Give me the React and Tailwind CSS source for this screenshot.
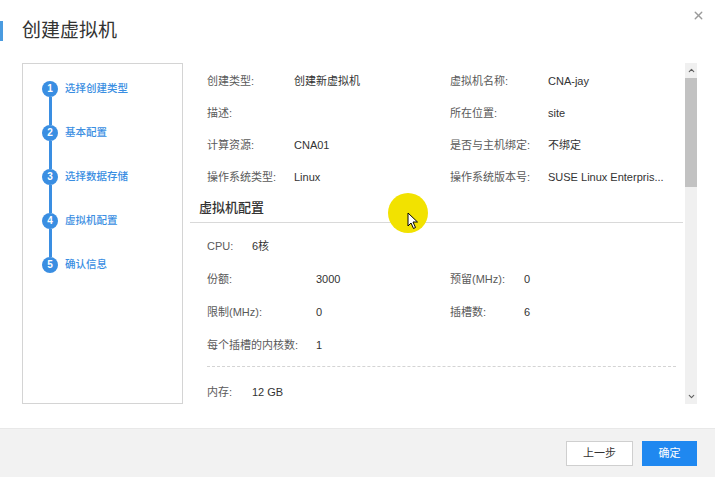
import { X, ChevronUp, ChevronDown } from 'lucide-react';

const steps = ['选择创建类型', '基本配置', '选择数据存储', '虚拟机配置', '确认信息'];

const basicRows = [
    ['创建类型:', '创建新虚拟机', '虚拟机名称:', 'CNA-jay'],
    ['描述:', '', '所在位置:', 'site'],
    ['计算资源:', 'CNA01', '是否与主机绑定:', '不绑定'],
    ['操作系统类型:', 'Linux', '操作系统版本号:', 'SUSE Linux Enterpris...'],
];

const cpuRows = [
    ['份额:', '3000', '预留(MHz):', '0'],
    ['限制(MHz):', '0', '插槽数:', '6'],
    ['每个插槽的内核数:', '1', '', ''],
];

export default function App() {
    return (
        <div className="relative w-[715px] h-[477px] bg-white flex flex-col font-['Liberation_Sans','Noto_Sans_CJK_SC',sans-serif] text-[#333] overflow-hidden">
            {/* header */}
            <div className="relative h-[63px] flex items-start">
                <div className="w-[3px] h-[20px] mt-[21px] bg-[#4a9be0]" />
                <h1 className="ml-[19px] mt-[18px] text-[19px] leading-[26px] text-[#333]">创建虚拟机</h1>
                <X size={13} strokeWidth={2.5} className="absolute right-[10px] top-[9px] text-[#9a9a9a]" />
            </div>

            {/* body */}
            <div className="flex h-[341px]">
                <div className="ml-[22px] w-[161px] h-full border border-[#d4d4d4] pt-[17px] pl-[19px]">
                    {steps.map((s, i) => (
                        <div key={s}>
                            <div className="flex items-center h-[16px]">
                                <div className="w-[16px] h-[16px] rounded-full bg-[#3a8ee2] text-white text-[10px] font-bold flex items-center justify-center leading-none">
                                    {i + 1}
                                </div>
                                <span className="ml-[7px] text-[10.5px] font-medium text-[#3a8ee2]">{s}</span>
                            </div>
                            {i < steps.length - 1 && <div className="ml-[6.5px] w-[3px] h-[28px] bg-[#3a8ee2]" />}
                        </div>
                    ))}
                </div>

                <div className="ml-[7px] flex-1 flex overflow-hidden">
                    <div className="flex-1 text-[11px] overflow-hidden">
                        <div className="pt-[2px] pl-[17px]">
                            {basicRows.map((r) => (
                                <div key={r[0]} className="flex items-center h-[32px]">
                                    <span className="w-[87px] text-[#5a5a5a]">{r[0]}</span>
                                    <span className="w-[156px]">{r[1]}</span>
                                    <span className="w-[98px] text-[#5a5a5a]">{r[2]}</span>
                                    <span>{r[3]}</span>
                                </div>
                            ))}
                        </div>
                        <div className="h-[30px] pl-[9px] flex items-center border-b border-[#d9d9d9] text-[13px] font-medium text-[#333]">
                            虚拟机配置
                        </div>
                        <div className="pt-[7px] pl-[17px]">
                            <div className="flex items-center h-[33px]">
                                <span className="w-[45px] text-[#5a5a5a]">CPU:</span>
                                <span>6核</span>
                            </div>
                            {cpuRows.map((r) => (
                                <div key={r[0]} className="flex items-center h-[33px]">
                                    <span className="w-[109px] text-[#5a5a5a]">{r[0]}</span>
                                    <span className="w-[134px]">{r[1]}</span>
                                    <span className="w-[74px] text-[#5a5a5a]">{r[2]}</span>
                                    <span>{r[3]}</span>
                                </div>
                            ))}
                        </div>
                        <div className="mt-[4px] ml-[17px] mr-[7px] border-t border-dashed border-[#d4d4d4]" />
                        <div className="mt-[10px] pl-[17px] flex items-center h-[30px]">
                            <span className="w-[45px] text-[#5a5a5a]">内存:</span>
                            <span>12 GB</span>
                        </div>
                    </div>

                    {/* scrollbar */}
                    <div className="ml-[2px] mr-[18px] w-[12px] flex flex-col bg-[#f0f0f0]">
                        <div className="h-[15px] flex items-center justify-center">
                            <ChevronUp size={9} strokeWidth={3} className="text-[#606060]" />
                        </div>
                        <div className="h-[109px] bg-[#c2c2c2]" />
                        <div className="flex-1" />
                        <div className="h-[15px] flex items-center justify-center">
                            <ChevronDown size={9} strokeWidth={3} className="text-[#606060]" />
                        </div>
                    </div>
                </div>
            </div>

            {/* footer */}
            <div className="mt-[24px] flex-1 bg-[#f2f2f2] border-t border-[#e8e8e8] flex items-center justify-end pr-[18px] gap-[9px]">
                <button className="w-[67px] h-[25px] bg-white border border-[#cfcfcf] text-[11px] text-[#333]">上一步</button>
                <button className="w-[55px] h-[25px] bg-[#1f88f0] text-[11px] text-white">确定</button>
            </div>

            {/* cursor highlight */}
            <div className="absolute left-[388px] top-[193px] w-[40px] h-[40px] rounded-full bg-[#f2e200]" />
            <svg className="absolute left-[407px] top-[212px]" width="12" height="18" viewBox="0 0 12 18">
                <path d="M1 1 L1 14 L4 11 L6.5 16.5 L8.5 15.5 L6 10 L10.5 10 Z" fill="white" stroke="black" strokeWidth="1" strokeLinejoin="round" />
            </svg>
        </div>
    );
}
